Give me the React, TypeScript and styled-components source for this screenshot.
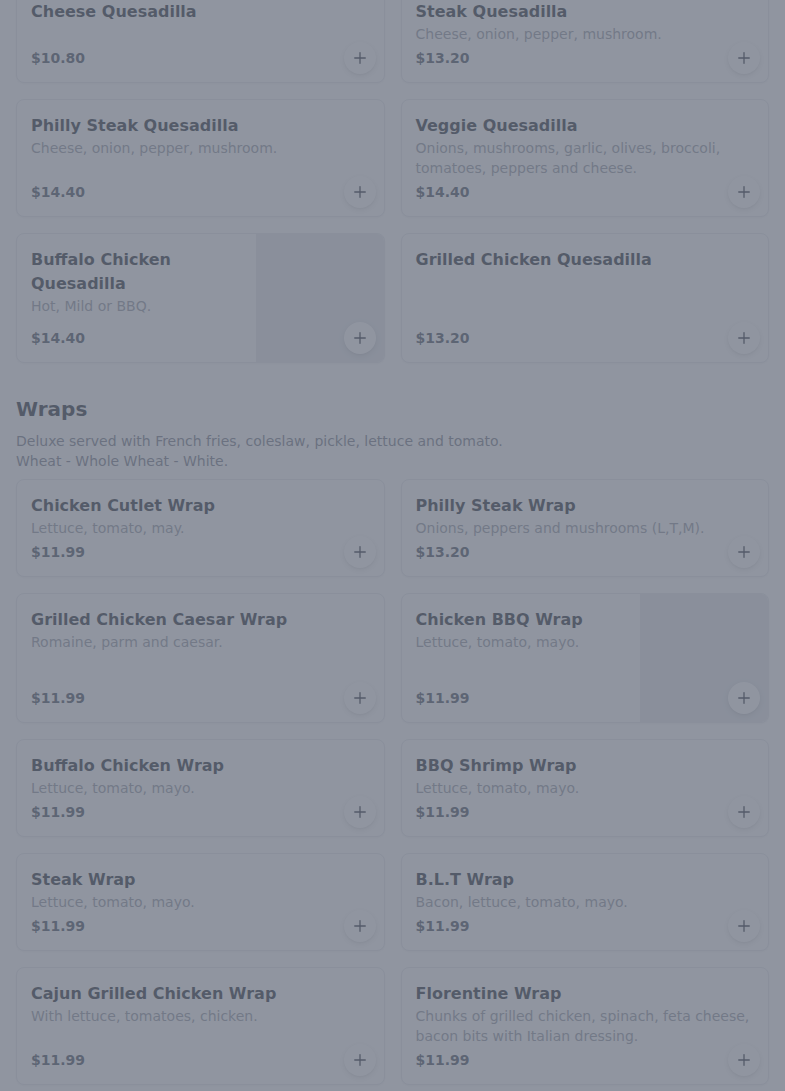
import React from "react";
import styled, { createGlobalStyle } from "styled-components";
import { Plus } from "lucide-react";

interface MenuItem {
    name: string;
    description?: string;
    price: string;
    image?: boolean;
}

interface Section {
    title?: string;
    notes?: string[];
    items: MenuItem[];
}

const sections: Section[] = [
    {
        items: [
            { name: "Cheese Quesadilla", price: "$10.80" },
            {
                name: "Steak Quesadilla",
                description: "Cheese, onion, pepper, mushroom.",
                price: "$13.20",
            },
            {
                name: "Philly Steak Quesadilla",
                description: "Cheese, onion, pepper, mushroom.",
                price: "$14.40",
            },
            {
                name: "Veggie Quesadilla",
                description:
                    "Onions, mushrooms, garlic, olives, broccoli, tomatoes, peppers and cheese.",
                price: "$14.40",
            },
            {
                name: "Buffalo Chicken Quesadilla",
                description: "Hot, Mild or BBQ.",
                price: "$14.40",
                image: true,
            },
            { name: "Grilled Chicken Quesadilla", price: "$13.20" },
        ],
    },
    {
        title: "Wraps",
        notes: [
            "Deluxe served with French fries, coleslaw, pickle, lettuce and tomato.",
            "Wheat - Whole Wheat - White.",
        ],
        items: [
            {
                name: "Chicken Cutlet Wrap",
                description: "Lettuce, tomato, may.",
                price: "$11.99",
            },
            {
                name: "Philly Steak Wrap",
                description: "Onions, peppers and mushrooms (L,T,M).",
                price: "$13.20",
            },
            {
                name: "Grilled Chicken Caesar Wrap",
                description: "Romaine, parm and caesar.",
                price: "$11.99",
            },
            {
                name: "Chicken BBQ Wrap",
                description: "Lettuce, tomato, mayo.",
                price: "$11.99",
                image: true,
            },
            {
                name: "Buffalo Chicken Wrap",
                description: "Lettuce, tomato, mayo.",
                price: "$11.99",
            },
            {
                name: "BBQ Shrimp Wrap",
                description: "Lettuce, tomato, mayo.",
                price: "$11.99",
            },
            {
                name: "Steak Wrap",
                description: "Lettuce, tomato, mayo.",
                price: "$11.99",
            },
            {
                name: "B.L.T Wrap",
                description: "Bacon, lettuce, tomato, mayo.",
                price: "$11.99",
            },
            {
                name: "Cajun Grilled Chicken Wrap",
                description: "With lettuce, tomatoes, chicken.",
                price: "$11.99",
            },
            {
                name: "Florentine Wrap",
                description:
                    "Chunks of grilled chicken, spinach, feta cheese, bacon bits with Italian dressing.",
                price: "$11.99",
            },
        ],
    },
];

const GlobalStyle = createGlobalStyle`
    * {
        box-sizing: border-box;
    }

    body {
        margin: 0;
        background: #ffffff;
        font-family: "DejaVu Sans", "Noto Sans", sans-serif;
        color: #111827;
    }
`;

const Page = styled.main`
    padding: 0 16px 16px;
    margin-top: -15px;
`;

const SectionBlock = styled.section`
    & + & {
        margin-top: 32px;
    }
`;

const SectionTitle = styled.h2`
    margin: 0 0 8px;
    font-size: 20px;
    line-height: 28px;
    font-weight: 700;
    color: #111827;
`;

const SectionNotes = styled.div`
    margin-bottom: 8px;
    font-size: 14px;
    line-height: 20px;
    color: #6b7280;
`;

const Grid = styled.div`
    display: grid;
    grid-template-columns: 1fr 1fr;
    gap: 16px;
`;

const Card = styled.article`
    position: relative;
    display: flex;
    background: #ffffff;
    border: 1px solid #e5e7eb;
    border-radius: 8px;
    box-shadow: 0 1px 2px rgba(0, 0, 0, 0.05);
    overflow: hidden;
`;

const CardBody = styled.div`
    flex: 1;
    min-width: 0;
    display: flex;
    flex-direction: column;
    padding: 14px 14px 12px;
`;

const ItemName = styled.h3`
    margin: 0;
    font-size: 16px;
    line-height: 24px;
    font-weight: 700;
    color: #111827;
`;

const ItemDescription = styled.p`
    margin: 0;
    font-size: 14px;
    line-height: 20px;
    color: #8b919c;
`;

const ItemPrice = styled.div`
    margin-top: auto;
    padding-top: 2px;
    font-size: 14px;
    line-height: 24px;
    font-weight: 700;
    color: #374151;
`;

const Photo = styled.div`
    flex: 0 0 128px;
    height: 128px;
    background: #e5e7eb;
`;

const AddButton = styled.button`
    position: absolute;
    right: 8px;
    bottom: 8px;
    width: 32px;
    height: 32px;
    border-radius: 50%;
    border: none;
    padding: 0;
    background: #ffffff;
    color: #111827;
    display: flex;
    align-items: center;
    justify-content: center;
    box-shadow: 0 2px 6px rgba(0, 0, 0, 0.12), 0 1px 2px rgba(0, 0, 0, 0.06);
    cursor: pointer;
`;

const Backdrop = styled.div`
    position: fixed;
    inset: 0;
    background: rgba(107, 114, 128, 0.75);
`;

const MenuCard: React.FC<{ item: MenuItem }> = ({ item }) => (
    <Card>
        <CardBody>
            <ItemName>{item.name}</ItemName>
            {item.description && (
                <ItemDescription>{item.description}</ItemDescription>
            )}
            <ItemPrice>{item.price}</ItemPrice>
        </CardBody>
        {item.image && <Photo />}
        <AddButton type="button" aria-label={`Add ${item.name}`}>
            <Plus size={18} strokeWidth={1.75} />
        </AddButton>
    </Card>
);

const App: React.FC = () => {
    return (
        <>
            <GlobalStyle />
            <Page>
                {sections.map((section, i) => (
                    <SectionBlock key={i}>
                        {section.title && (
                            <SectionTitle>{section.title}</SectionTitle>
                        )}
                        {section.notes && (
                            <SectionNotes>
                                {section.notes.map((line) => (
                                    <div key={line}>{line}</div>
                                ))}
                            </SectionNotes>
                        )}
                        <Grid>
                            {section.items.map((item) => (
                                <MenuCard key={item.name} item={item} />
                            ))}
                        </Grid>
                    </SectionBlock>
                ))}
            </Page>
            <Backdrop />
        </>
    );
};

export default App;
